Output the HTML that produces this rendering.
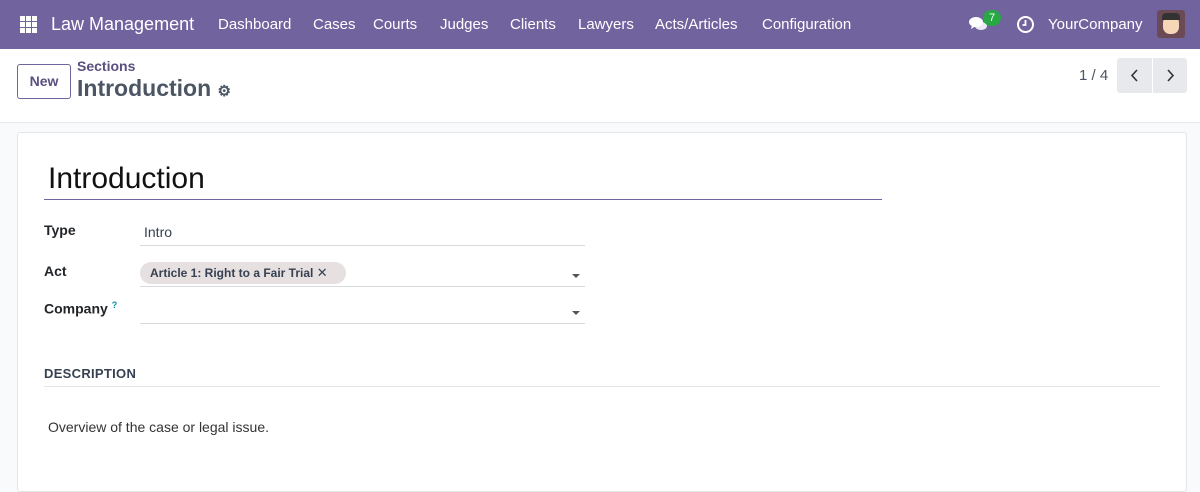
<!DOCTYPE html>
<html><head><style>
*{box-sizing:border-box;margin:0;padding:0}
body{width:1200px;height:476px;overflow:hidden;background:#f9fafb;font-family:"Liberation Sans",sans-serif;color:#374151;position:relative}
.nav{position:absolute;left:0;top:0;width:1200px;height:49px;background:#71639e;color:#fff}
.nav span{position:absolute;top:16px;font-size:15px}
.ctrl{position:absolute;left:0;top:49px;width:1200px;height:74px;background:#fff;border-bottom:1px solid #e5e7eb}
.card{position:absolute;left:17px;top:132px;width:1170px;height:360px;background:#fff;border:1px solid #e3e5e8;border-radius:3px}
.lbl{position:absolute;left:44px;font-weight:bold;font-size:14px;color:#212529}
.line{position:absolute;left:140px;width:445px;height:1px;background:#d8dadd}
.caret{position:absolute;left:572px;width:0;height:0;border-left:4px solid transparent;border-right:4px solid transparent;border-top:4px solid #555}
</style></head><body>
<div class="nav">
<svg style="position:absolute;left:20px;top:16px" width="17" height="17" viewBox="0 0 17 17" fill="#fff"><rect x="0" y="0" width="5" height="5"/><rect x="6" y="0" width="5" height="5"/><rect x="12" y="0" width="5" height="5"/><rect x="0" y="6" width="5" height="5"/><rect x="6" y="6" width="5" height="5"/><rect x="12" y="6" width="5" height="5"/><rect x="0" y="12" width="5" height="5"/><rect x="6" y="12" width="5" height="5"/><rect x="12" y="12" width="5" height="5"/></svg>
<span style="left:51px;top:14px;font-size:18px">Law Management</span>
<span style="left:218px">Dashboard</span><span style="left:313px">Cases</span><span style="left:373px">Courts</span><span style="left:440px">Judges</span><span style="left:510px">Clients</span><span style="left:578px">Lawyers</span><span style="left:655px">Acts/Articles</span><span style="left:762px">Configuration</span>
<svg style="position:absolute;left:969px;top:15px" width="20" height="18" viewBox="0 0 20 18" fill="#fff"><ellipse cx="7" cy="7" rx="7" ry="5"/><path d="M3 10 L2 14 L7 11Z"/><ellipse cx="12" cy="11" rx="6" ry="4" opacity=".85"/></svg>
<div style="position:absolute;left:983px;top:10px;width:18px;height:16px;border-radius:8px;background:#28a745;color:#fff;font-size:11px;text-align:center;line-height:16px">7</div>
<svg style="position:absolute;left:1016px;top:15px" width="19" height="19" viewBox="0 0 19 19"><circle cx="9.5" cy="9.5" r="7.5" fill="none" stroke="#fff" stroke-width="2"/><path d="M9.5 5v5h-3" fill="none" stroke="#fff" stroke-width="1.8"/></svg>
<span style="left:1048px">YourCompany</span>
<div style="position:absolute;left:1157px;top:10px;width:28px;height:28px;border-radius:3px;background:#6b4a55"><div style="position:absolute;left:6px;top:6px;width:16px;height:18px;border-radius:7px;background:#f5d7b8"></div><div style="position:absolute;left:5px;top:3px;width:18px;height:7px;background:#333;border-radius:4px 4px 0 0"></div></div>
</div>
<div class="ctrl">
<div style="position:absolute;left:17px;top:15px;width:54px;height:35px;border:1px solid #71639e;border-radius:3px;color:#5a4f7f;font-size:14px;font-weight:bold;text-align:center;line-height:33px">New</div>
<div style="position:absolute;left:77px;top:9px;font-size:14px;color:#5a4f7f;font-weight:bold">Sections</div>
<div style="position:absolute;left:77px;top:26px;font-size:23px;font-weight:bold;color:#4b5563">Introduction <span style="font-size:15px">⚙</span></div>
<div style="position:absolute;left:1079px;top:18px;font-size:15px;color:#4b5563">1 / 4</div>
<div style="position:absolute;left:1117px;top:9px;width:70px;height:35px;background:#e7e9ed;border-radius:3px"><div style="position:absolute;left:35px;top:0;width:1px;height:35px;background:#fff"></div>
<svg style="position:absolute;left:12px;top:11px" width="12" height="13"><path d="M8 1L3 6.5L8 12" stroke="#333" stroke-width="1.6" fill="none"/></svg>
<svg style="position:absolute;left:47px;top:11px" width="12" height="13"><path d="M4 1L9 6.5L4 12" stroke="#333" stroke-width="1.6" fill="none"/></svg></div>
</div>
<div class="card"></div>
<div style="position:absolute;left:48px;top:162px;font-size:30px;color:#111">Introduction</div>
<div style="position:absolute;left:44px;top:199px;width:838px;height:1px;background:#71639e"></div>
<div class="lbl" style="top:222px">Type</div>
<div style="position:absolute;left:144px;top:224px;font-size:14px">Intro</div>
<div class="line" style="top:245px"></div>
<div class="lbl" style="top:263px">Act</div>
<div style="position:absolute;left:140px;top:262px;width:206px;height:22px;border-radius:11px;background:#e6e0e0;font-size:12px;font-weight:bold;line-height:22px;padding-left:10px;color:#374151">Article 1: Right to a Fair Trial <span style="font-weight:normal;font-size:13px">✕</span></div>
<div class="caret" style="top:274px"></div>
<div class="line" style="top:286px"></div>
<div class="lbl" style="top:300px">Company <sup style="color:#0d8ea8;font-size:9px">?</sup></div>
<div class="caret" style="top:311px"></div>
<div class="line" style="top:323px"></div>
<div style="position:absolute;left:44px;top:366px;font-size:13px;font-weight:bold;color:#374151;letter-spacing:.3px">DESCRIPTION</div>
<div style="position:absolute;left:44px;top:386px;width:1116px;height:1px;background:#e3e5e8"></div>
<div style="position:absolute;left:48px;top:419px;font-size:14px;color:#333">Overview of the case or legal issue.</div>
</body></html>
